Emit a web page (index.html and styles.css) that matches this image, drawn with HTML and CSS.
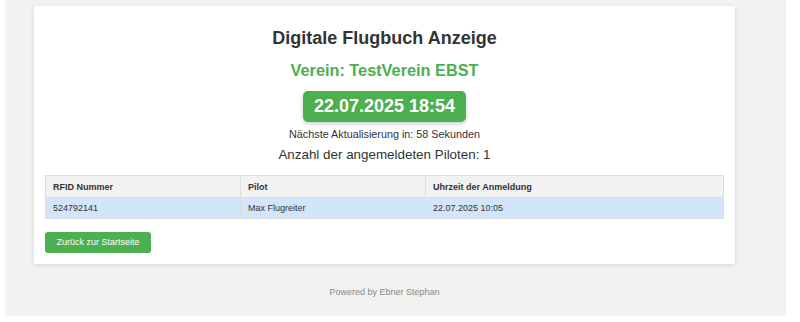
FILE: index.html
```html
<!DOCTYPE html>
<html>
<head>
<title>Digitale Flugbuch Anzeige</title>
<link rel="stylesheet" href="styles.css">
</head>
<body>
<div class="page">
<div class="card">
<h1>Digitale Flugbuch Anzeige</h1>
<h2>Verein: TestVerein EBST</h2>
<div class="clock-wrap"><div class="clock">22.07.2025 18:54</div></div>
<p class="refresh">Nächste Aktualisierung in: 58 Sekunden</p>
<p class="count">Anzahl der angemeldeten Piloten: 1</p>
<table class="pilots">
<tr>
<th class="c-rfid">RFID Nummer</th>
<th class="c-pilot">Pilot</th>
<th>Uhrzeit der Anmeldung</th>
</tr>
<tr class="active">
<td>524792141</td>
<td>Max Flugreiter</td>
<td>22.07.2025 10:05</td>
</tr>
</table>
<a class="btn" href="#">Zurück zur Startseite</a>
</div>
<div class="footer">Powered by Ebner Stephan</div>
</div>
</body>
</html>
```
FILE: styles.css
```css
body {
margin: 0;
background: #fff;
font-family: "Liberation Sans", Arial, sans-serif;
color: #333;
}
.page {
margin-left: 5px;
width: 781px;
height: 316px;
background: #f2f2f2;
padding-top: 6px;
box-sizing: border-box;
}
.card {
margin-left: 29px;
width: 701px;
box-sizing: border-box;
background: #fff;
padding: 21px 11px 11px 11px;
box-shadow: 0 1px 5px rgba(0,0,0,0.12);
text-align: center;
}
h1 {
margin: 0;
font-size: 18px;
line-height: 22px;
color: #333;
}
h2 {
margin: 11px 0 0 0;
font-size: 16.3px;
line-height: 20px;
color: #4caf50;
}
.clock-wrap {
margin-top: 11px;
}
.clock {
display: inline-block;
background: #4caf50;
color: #fff;
font-size: 18px;
font-weight: bold;
line-height: 31px;
padding: 0 11px;
border-radius: 5px;
box-shadow: 0 2px 4px rgba(0,0,0,0.2);
}
.refresh {
margin: 5px 0 0 0;
font-size: 10.8px;
line-height: 14px;
}
.count {
margin: 5px 0 0 0;
font-size: 13.4px;
line-height: 18px;
}
.pilots {
margin-top: 11px;
width: 100%;
border-collapse: collapse;
text-align: left;
font-size: 9px;
}
.pilots th, .pilots td {
border: 1px solid #ddd;
padding: 0 7px;
}
.pilots th {
background: #f2f2f2;
height: 21px;
}
.pilots td {
height: 20px;
}
.c-rfid { width: 180px; }
.c-pilot { width: 170px; }
.active td {
background: #d3e5fa;
}
.btn {
display: block;
width: 106px;
margin-top: 13px;
line-height: 21px;
background: #4caf50;
color: #fff;
font-size: 9px;
text-decoration: none;
border-radius: 3px;
}
.footer {
margin: 23px 0 0 29px;
width: 701px;
text-align: center;
font-size: 9px;
color: #888;
}
```
